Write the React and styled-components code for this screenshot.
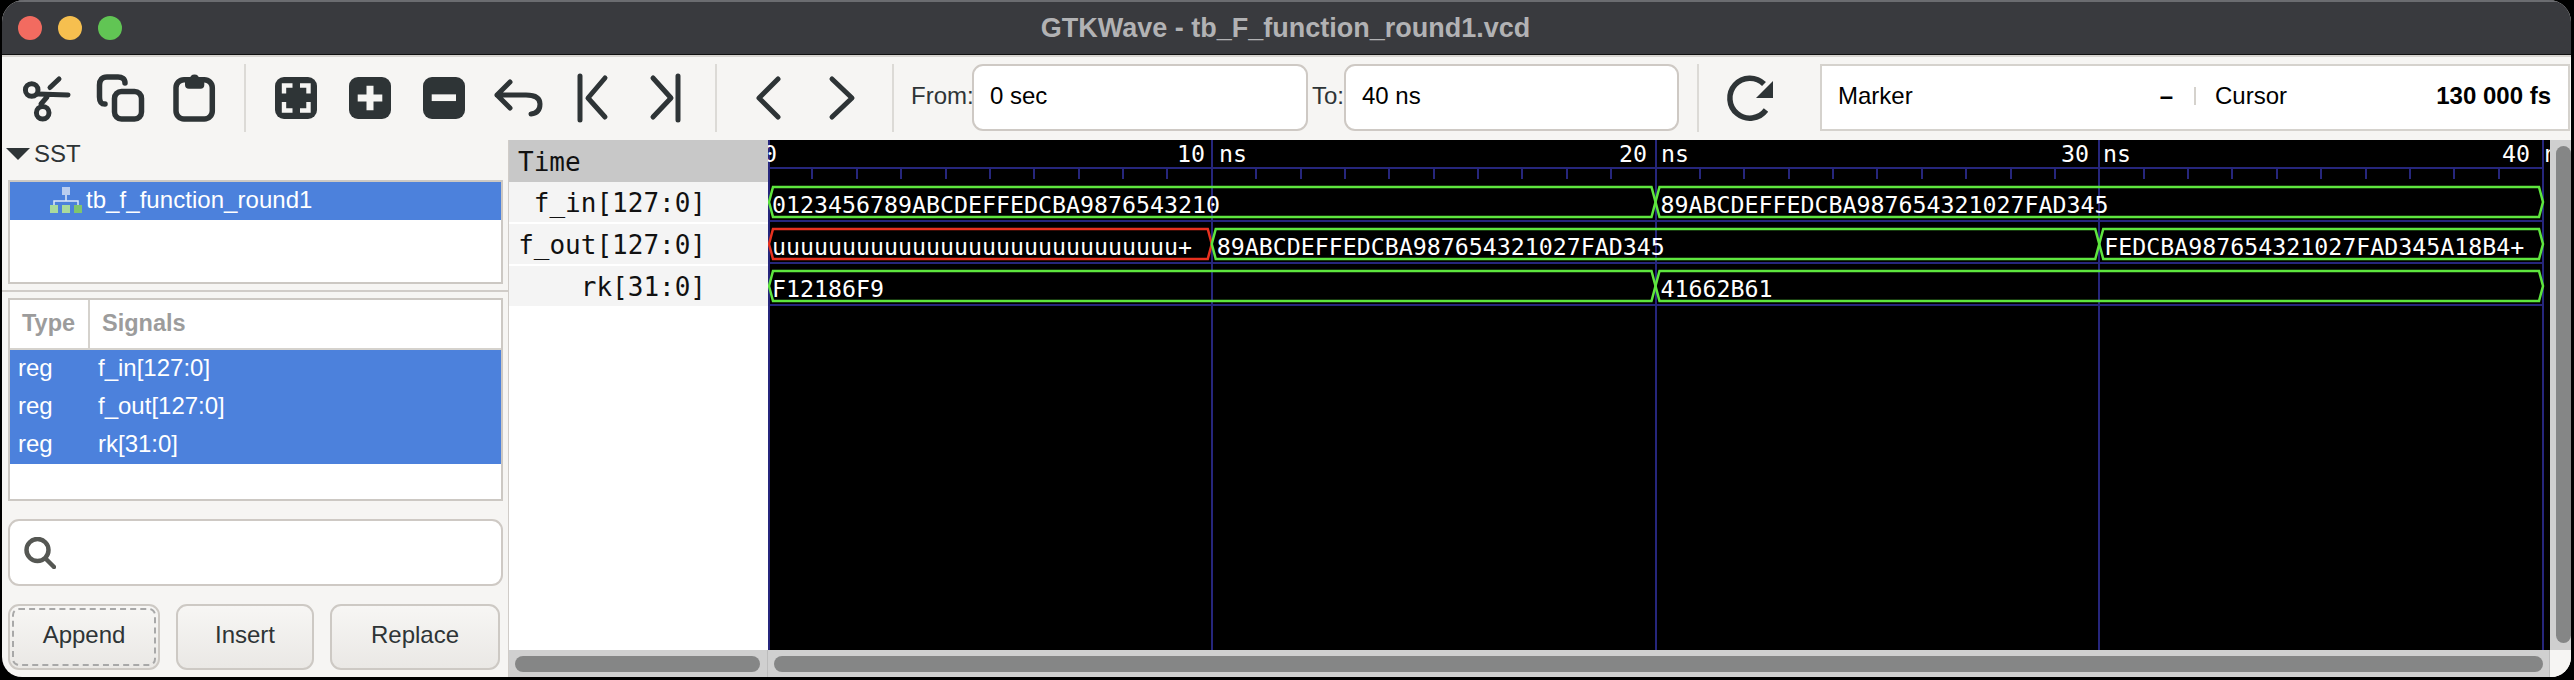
import styled, { createGlobalStyle } from 'styled-components'

const GlobalStyle = createGlobalStyle`
  html, body {
    margin: 0;
    padding: 0;
    background: #000;
  }
  body {
    width: 2574px;
    height: 680px;
    overflow: hidden;
    font-family: "Liberation Sans", Arial, sans-serif;
  }
`

const Window = styled.div`
  width: 2569px;
  height: 677px;
  margin-left: 2px;
  border-radius: 22px 22px 20px 20px;
  overflow: hidden;
  background: #f6f5f3;
  display: flex;
  flex-direction: column;
`

const TitleBar = styled.div`
  height: 55px;
  flex: none;
  box-sizing: border-box;
  border-top: 2px solid #6b6c70;
  border-bottom: 1px solid #111;
  background: #393a3e;
  display: flex;
  align-items: center;
  position: relative;
`

const Lights = styled.div`
  display: flex;
  gap: 16px;
  padding-left: 16px;
  position: absolute;
`

const Light = styled.span`
  width: 24px;
  height: 24px;
  border-radius: 50%;
  background: ${(props) => props.color};
`

const Title = styled.div`
  flex: 1;
  text-align: center;
  font-size: 27px;
  font-weight: bold;
  color: #b2b2b4;
  padding-right: 2px;
`

const Toolbar = styled.div`
  height: 85px;
  flex: none;
  box-sizing: border-box;
  border-top: 2px solid #d8d5d1;
  padding-left: 7px;
  display: flex;
  align-items: center;
  color: #2e3436;
  font-size: 24px;
`

const ToolSep = styled.div`
  width: 2px;
  height: 68px;
  background: #dcdad6;
  margin: 0 ${(props) => props.right || 13}px 2px ${(props) => props.left || 13}px;
  flex: none;
`

const ToolLabel = styled.label`
  color: #2e3436;
  width: ${(props) => props.width}px;
  padding-left: ${(props) => props.indent || 0}px;
  box-sizing: border-box;
  flex: none;
  margin-bottom: 5px;
`

const RangeInput = styled.div`
  width: ${(props) => props.width}px;
  height: 67px;
  margin-bottom: 2px;
  box-sizing: border-box;
  flex: none;
  background: #fff;
  border: 2px solid #cec9c4;
  border-radius: 11px;
  padding: 0 0 3px 16px;
  display: flex;
  align-items: center;
  color: #000;
`

const ReadoutBox = styled.div`
  width: 750px;
  height: 67px;
  margin: 0 0 2px 35px;
  box-sizing: border-box;
  flex: none;
  background: #fff;
  border: 2px solid #d5d2cd;
  padding: 0 17px 3px 16px;
  display: flex;
  align-items: center;
  color: #000;
`

const ReadoutCell = styled.div`
  display: flex;
  justify-content: space-between;
  align-items: center;
  width: ${(props) => (props.width ? `${props.width}px` : 'auto')};
  flex: ${(props) => (props.width ? 'none' : 1)};
`

const ReadoutValue = styled.span`
  font-weight: bold;
`

const ReadoutDivider = styled.span`
  width: 2px;
  height: 18px;
  background: #d5d2cd;
  margin: 0 19px 0 21px;
  flex: none;
`

const Main = styled.div`
  flex: 1;
  min-height: 0;
  display: flex;
`

const LeftPane = styled.div`
  width: 507px;
  flex: none;
  box-sizing: border-box;
  border-right: 1px solid #d0ccc8;
  display: flex;
  flex-direction: column;
  color: #2e3436;
  font-size: 24px;
`

const SstHeader = styled.div`
  height: 40px;
  flex: none;
  box-sizing: border-box;
  padding: 0 0 12px 4px;
  display: flex;
  align-items: center;
  gap: 4px;
`

const ListBox = styled.div`
  margin: 0 5px 0 6px;
  box-sizing: border-box;
  border: 2px solid #ccc8c3;
  background: #fff;
  height: ${(props) => props.height}px;
  flex: none;
`

const TreeRow = styled.div`
  height: 38px;
  box-sizing: border-box;
  background: #4c81dc;
  color: #fff;
  display: flex;
  align-items: center;
  padding: 0 0 2px 40px;
  gap: 4px;
  letter-spacing: 0.05px;
`

const PaneDivider = styled.div`
  height: 2px;
  flex: none;
  background: #d0ccc8;
  margin: 6px 0;
`

const SignalHead = styled.div`
  height: 50px;
  box-sizing: border-box;
  border-bottom: 2px solid #d5d2cd;
  display: flex;
  align-items: center;
  color: #9c9c9c;
  font-weight: bold;
  font-size: 23.5px;
`

const TypeHead = styled.div`
  width: 80px;
  height: 100%;
  flex: none;
  box-sizing: border-box;
  border-right: 2px solid #d5d2cd;
  padding: 0 0 2px 12px;
  display: flex;
  align-items: center;
`

const SignalsHead = styled.div`
  padding: 0 0 2px 12px;
`

const SignalRow = styled.div`
  height: 38px;
  box-sizing: border-box;
  padding-bottom: 2px;
  background: #4c81dc;
  color: #fff;
  display: flex;
  align-items: center;
`

const SignalType = styled.span`
  width: 88px;
  padding-left: 8px;
  box-sizing: border-box;
  flex: none;
`

const SearchBox = styled.div`
  margin: 18px 5px 0 6px;
  height: 67px;
  flex: none;
  box-sizing: border-box;
  background: #fff;
  border: 2px solid #cec9c4;
  border-radius: 11px;
  padding-left: 14px;
  display: flex;
  align-items: center;
`

const ButtonRow = styled.div`
  margin: 18px 5px 0 6px;
  display: flex;
  gap: 16px;
`

const PaneButton = styled.button`
  width: ${(props) => props.width}px;
  height: 66px;
  flex: none;
  box-sizing: border-box;
  border: 2px solid #cdc9c4;
  border-radius: 11px;
  background: linear-gradient(#f7f6f4, #eae8e5);
  color: #2e3436;
  font-family: inherit;
  font-size: 24px;
  padding: 0 0 5px;
  outline: ${(props) => (props.focused ? '2px dashed #a8a8a8' : 'none')};
  outline-offset: -6px;
`

const RightPane = styled.div`
  flex: 1;
  min-width: 0;
  display: flex;
  flex-direction: column;
`

const ViewRow = styled.div`
  height: 510px;
  flex: none;
  display: flex;
`

const NamesColumn = styled.div`
  width: 259px;
  flex: none;
  background: #fff;
  font-family: "DejaVu Sans Mono", monospace;
  font-size: 26px;
  color: #111;
  display: flex;
  flex-direction: column;
  gap: 2px;
`

const TimeHead = styled.div`
  height: 42px;
  margin-bottom: -2px;
  box-sizing: border-box;
  background: #c8c8c8;
  padding: 2px 0 0 9px;
  display: flex;
  align-items: center;
`

const NameRow = styled.div`
  height: 40px;
  box-sizing: border-box;
  background: #f4f4f4;
  padding: 2px 62px 0 0;
  display: flex;
  align-items: center;
  justify-content: flex-end;
`

const WaveSvg = styled.svg`
  display: block;
  width: 1782px;
  height: 510px;
  flex: none;
  background: #000;
`

const WaveText = styled.text`
  font-family: "DejaVu Sans Mono", monospace;
  font-size: 23.25px;
  fill: #fff;
`

const VScroll = styled.div`
  flex: 1;
  background: #cfcfcf;
  padding: 6px 0 7px 6px;
  display: flex;
`

const VThumb = styled.div`
  flex: 1;
  background: #858686;
  border-radius: 8px;
`

const HScrollRow = styled.div`
  flex: 1;
  display: flex;
`

const HTrack = styled.div`
  width: ${(props) => props.width}px;
  flex: none;
  box-sizing: border-box;
  background: #d0d0d0;
  padding: 6px ${(props) => props.right}px 5px ${(props) => props.left}px;
  display: flex;
  border-right: 1px solid #bdbdbd;
`

const HThumb = styled.div`
  flex: 1;
  height: 16px;
  background: #858686;
  border-radius: 8px;
`

const Corner = styled.div`
  flex: 1;
  background: #f6f5f3;
`

const INK = '#2e3436'
const PAPER = '#f6f5f3'

// icons are written in page coordinates, the cell just picks its window with the viewBox
function Cell({ start, children }) {
  return (
    <svg width="74" height="83" viewBox={`${start} 57 74 83`} fill="none" stroke={INK} strokeWidth="5" strokeLinecap="round" strokeLinejoin="round" style={{ flex: 'none' }}>
      {children}
    </svg>
  )
}

const ScissorsIcon = () => (
  <Cell start={9}>
    <circle cx="31.7" cy="90" r="6.3" />
    <circle cx="42.7" cy="112.7" r="6.3" />
    <path d="M38 94 L68 95 M50 87.5 L59 79 M41 104 L47 97" />
  </Cell>
)

const CopyIcon = () => (
  <Cell start={83}>
    <path d="M125 83 C125 79 122 77 118 77 H107 C102 77 99.5 80 99.5 85 V97 C99.5 102 101 104 105 104" strokeWidth="5.5" />
    <rect x="114.5" y="91.5" width="27" height="27.5" rx="7" strokeWidth="5.5" />
  </Cell>
)

const PasteIcon = () => (
  <Cell start={157}>
    <rect x="176" y="79.7" width="36.3" height="39.3" rx="8" strokeWidth="5.5" />
    <path d="M185 79 H190 Q190 74.5 194.5 74.5 Q199 74.5 199 79 H204.3 V85 Q204.3 88.7 200.5 88.7 H189 Q185 88.7 185 85 Z" fill={INK} stroke="none" />
  </Cell>
)

const SolidKey = ({ start, children }) => (
  <Cell start={start}>
    <rect x={start + 16} y="77" width="42" height="42" rx="9" fill={INK} stroke="none" />
    {children}
  </Cell>
)

const ZoomFitIcon = () => (
  <SolidKey start={259}>
    <path d="M284 93.5 V85.5 H292.5 M300 85.5 H308.5 V93.5 M308.5 102 V110.5 H300 M292.5 110.5 H284 V102" stroke={PAPER} strokeWidth="4.4" strokeLinecap="butt" strokeLinejoin="miter" />
  </SolidKey>
)

const ZoomInIcon = () => (
  <SolidKey start={333}>
    <path d="M357.7 98 H382.3 M370 85.7 V110.3" stroke={PAPER} strokeWidth="7" strokeLinecap="butt" />
  </SolidKey>
)

const ZoomOutIcon = () => (
  <SolidKey start={407}>
    <path d="M431.7 97.7 H456" stroke={PAPER} strokeWidth="6.7" strokeLinecap="butt" />
  </SolidKey>
)

const UndoIcon = () => (
  <Cell start={481}>
    <path d="M510 82 L497 95 L510 108 M497 95 H526 Q540 95 540 104 Q540 113 531 114" />
  </Cell>
)

const FirstIcon = () => (
  <Cell start={555}>
    <path d="M580 76 V120 M605 78 L588 98 L605 117" />
  </Cell>
)

const LastIcon = () => (
  <Cell start={629}>
    <path d="M678 76 V120 M653 78 L671 98 L653 117" />
  </Cell>
)

const PrevIcon = () => (
  <Cell start={732}>
    <path d="M778 79 L759 98 L778 117" />
  </Cell>
)

const NextIcon = () => (
  <Cell start={806}>
    <path d="M832 79 L852 98 L832 117" />
  </Cell>
)

const ReloadIcon = () => (
  <Cell start={1711}>
    <path d="M1764 84 A20 20 0 1 0 1766 110" strokeWidth="5.5" strokeLinecap="butt" />
    <path d="M1773 81 V98 H1756 Z" fill={INK} stroke="none" />
  </Cell>
)

const Caret = () => (
  <svg width="24" height="12" viewBox="0 0 24 12">
    <path d="M0 0 H24 L12 12 Z" fill={INK} />
  </svg>
)

const ScopeIcon = () => (
  <svg width="32" height="26" viewBox="0 0 32 26">
    <path d="M16 8 V14 M4 18 V14 H28 V18" stroke="#dfe8f7" strokeWidth="1.5" fill="none" />
    <rect x="12" y="0" width="8" height="8" fill="#b9cdf0" />
    <rect x="0" y="18" width="8" height="8" fill="#a9da9c" />
    <rect x="12" y="18" width="8" height="8" fill="#a9da9c" />
    <rect x="24" y="18" width="8" height="8" fill="#7fc56d" />
  </svg>
)

const SearchIcon = () => (
  <svg width="32" height="32" viewBox="0 0 32 32" fill="none" stroke="#555753" strokeWidth="4.5" strokeLinecap="round">
    <circle cx="13.5" cy="13" r="11" />
    <path d="M22 22 L30 30" />
  </svg>
)

const GREEN = '#5ee63e'
const RED = '#e8311f'
const GRID = '#26267c'

const T0 = 768
const STEP = 443.75
const at = (t) => T0 + (t / 10) * STEP

// the time labels do not sit at a fixed offset from their grid line
const timeLabels = [
  { x: 1177, text: '10 ns' },
  { x: 1619, text: '20 ns' },
  { x: 2061, text: '30 ns' },
  { x: 2502, text: '40 ns' },
]

const rows = [
  {
    mid: 202,
    segments: [
      { from: 0, to: 20, text: '0123456789ABCDEFFEDCBA9876543210' },
      { from: 20, to: 40, text: '89ABCDEFFEDCBA987654321027FAD345' },
    ],
  },
  {
    mid: 244,
    segments: [
      { from: 0, to: 10, text: 'uuuuuuuuuuuuuuuuuuuuuuuuuuuuu+', color: RED },
      { from: 10, to: 30, text: '89ABCDEFFEDCBA987654321027FAD345' },
      { from: 30, to: 40, text: 'FEDCBA987654321027FAD345A18B4+' },
    ],
  },
  {
    mid: 286,
    segments: [
      { from: 0, to: 20, text: 'F12186F9' },
      { from: 20, to: 40, text: '41662B61' },
    ],
  },
]

function busPoints(s, e, m) {
  return [
    [s, m], [s + 4, m - 15], [e - 4, m - 15], [e, m], [e - 4, m + 15], [s + 4, m + 15],
  ].map((p) => p.join(',')).join(' ')
}

function Waves() {
  const ticks = []
  for (let i = 1; i < 40; i++) {
    if (i % 10 !== 0) ticks.push(T0 + i * (STEP / 10))
  }
  return (
    <WaveSvg viewBox="768 140 1782 510">
      <path d={`M${T0} 168 H${at(40)}`} stroke={GRID} strokeWidth="2" />
      {ticks.map((x) => (
        <path key={x} d={`M${Math.round(x)} 168 V179`} stroke={GRID} strokeWidth="2" />
      ))}
      {[221, 263, 305].map((y) => (
        <path key={y} d={`M${T0} ${y} H${at(40)}`} stroke={GRID} strokeWidth="2" />
      ))}
      {[0, 10, 20, 30, 40].map((t) => (
        <path key={t} d={`M${Math.round(at(t)) + (t === 0 ? 1 : 0)} 140 V650`} stroke={GRID} strokeWidth="2" />
      ))}
      {rows.map((row) =>
        row.segments.map((seg) => (
          <polygon
            key={row.mid + '-' + seg.from}
            points={busPoints(at(seg.from) + (seg.from === 0 ? 1 : 0), at(seg.to), row.mid)}
            fill="none"
            stroke={seg.color || GREEN}
            strokeWidth="2.5"
          />
        ))
      )}
      <WaveText x="763" y="162">0</WaveText>
      {timeLabels.map((label) => (
        <WaveText key={label.x} x={label.x} y="162">{label.text}</WaveText>
      ))}
      {rows.map((row) =>
        row.segments.map((seg) => (
          <WaveText key={row.mid + '-' + seg.from} x={at(seg.from) + (seg.from === 0 ? 4 : 5)} y={row.mid + 11}>
            {seg.text}
          </WaveText>
        ))
      )}
    </WaveSvg>
  )
}

const names = ['f_in[127:0]', 'f_out[127:0]', 'rk[31:0]']

function App() {
  return (
    <>
      <GlobalStyle />
      <Window>
        <TitleBar>
          <Lights>
            <Light color="#f26b60" />
            <Light color="#f6bf4f" />
            <Light color="#61c554" />
          </Lights>
          <Title>GTKWave - tb_F_function_round1.vcd</Title>
        </TitleBar>
        <Toolbar>
          <ScissorsIcon />
          <CopyIcon />
          <PasteIcon />
          <ToolSep />
          <ZoomFitIcon />
          <ZoomInIcon />
          <ZoomOutIcon />
          <UndoIcon />
          <FirstIcon />
          <LastIcon />
          <ToolSep left={12} right={15} />
          <PrevIcon />
          <NextIcon />
          <ToolSep left={12} right={17} />
          <ToolLabel width={61}>From:</ToolLabel>
          <RangeInput width={336}>0 sec</RangeInput>
          <ToolLabel width={36} indent={4}>To:</ToolLabel>
          <RangeInput width={335}>40 ns</RangeInput>
          <ToolSep left={18} right={12} />
          <ReloadIcon />
          <ReadoutBox>
            <ReadoutCell width={335}>
              <span>Marker</span>
              <ReadoutValue>–</ReadoutValue>
            </ReadoutCell>
            <ReadoutDivider />
            <ReadoutCell>
              <span>Cursor</span>
              <ReadoutValue>130 000 fs</ReadoutValue>
            </ReadoutCell>
          </ReadoutBox>
        </Toolbar>
        <Main>
          <LeftPane>
            <SstHeader>
              <Caret />
              <span>SST</span>
            </SstHeader>
            <ListBox height={104}>
              <TreeRow>
                <ScopeIcon />
                <span>tb_f_function_round1</span>
              </TreeRow>
            </ListBox>
            <PaneDivider />
            <ListBox height={203}>
              <SignalHead>
                <TypeHead>Type</TypeHead>
                <SignalsHead>Signals</SignalsHead>
              </SignalHead>
              {names.map((name) => (
                <SignalRow key={name}>
                  <SignalType>reg</SignalType>
                  <span>{name}</span>
                </SignalRow>
              ))}
            </ListBox>
            <SearchBox>
              <SearchIcon />
            </SearchBox>
            <ButtonRow>
              <PaneButton width={152} focused>Append</PaneButton>
              <PaneButton width={138}>Insert</PaneButton>
              <PaneButton width={170}>Replace</PaneButton>
            </ButtonRow>
          </LeftPane>
          <RightPane>
            <ViewRow>
              <NamesColumn>
                <TimeHead>Time</TimeHead>
                {names.map((name) => (
                  <NameRow key={name}>{name}</NameRow>
                ))}
              </NamesColumn>
              <Waves />
              <VScroll>
                <VThumb />
              </VScroll>
            </ViewRow>
            <HScrollRow>
              <HTrack width={259} left={6} right={7}>
                <HThumb />
              </HTrack>
              <HTrack width={1782} left={6} right={6}>
                <HThumb />
              </HTrack>
              <Corner />
            </HScrollRow>
          </RightPane>
        </Main>
      </Window>
    </>
  )
}

export default App
